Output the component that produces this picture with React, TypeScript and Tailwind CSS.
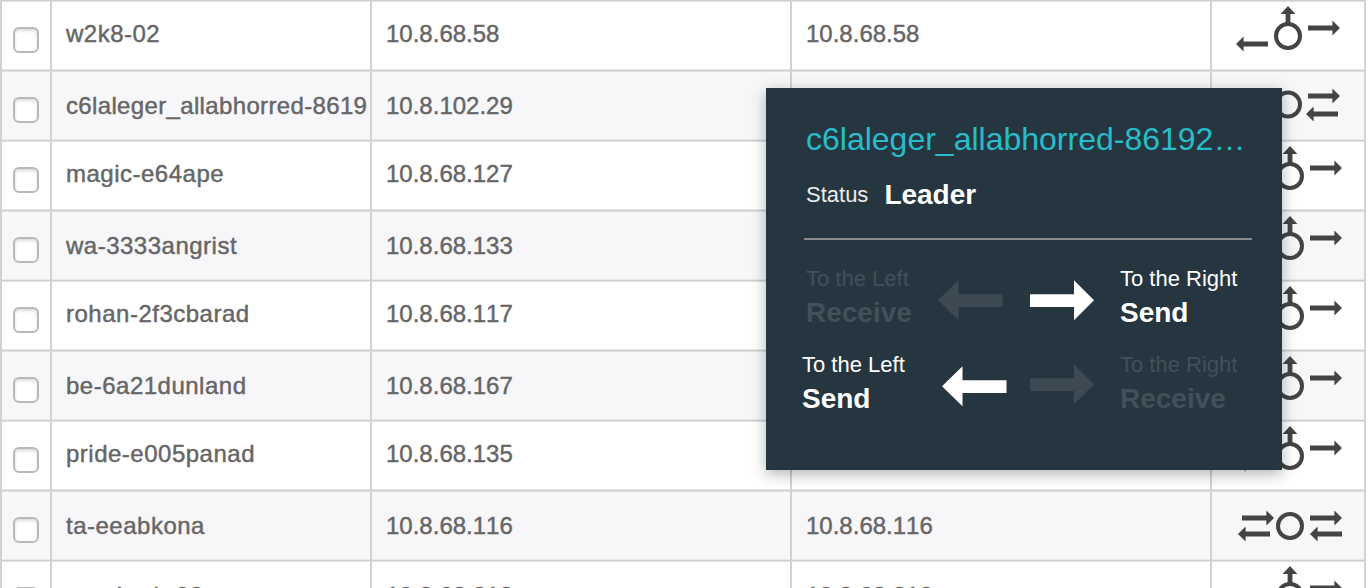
import type { ReactNode } from "react";

type Topology = "default" | "leader" | "both";
type Host = { name: string; ip: string; address: string; topology: Topology };

const hosts: Host[] = [
  { name: "w2k8-02", ip: "10.8.68.58", address: "10.8.68.58", topology: "default" },
  { name: "c6laleger_allabhorred-8619", ip: "10.8.102.29", address: "10.8.102.29", topology: "leader" },
  { name: "magic-e64ape", ip: "10.8.68.127", address: "10.8.68.127", topology: "default" },
  { name: "wa-3333angrist", ip: "10.8.68.133", address: "10.8.68.133", topology: "default" },
  { name: "rohan-2f3cbarad", ip: "10.8.68.117", address: "10.8.68.117", topology: "default" },
  { name: "be-6a21dunland", ip: "10.8.68.167", address: "10.8.68.167", topology: "default" },
  { name: "pride-e005panad", ip: "10.8.68.135", address: "10.8.68.135", topology: "default" },
  { name: "ta-eeabkona", ip: "10.8.68.116", address: "10.8.68.116", topology: "both" },
  { name: "mordorrb-00", ip: "10.8.68.212", address: "10.8.68.212", topology: "default" },
];

function Right({ x, y }: { x: number; y: number }) {
  return <path d={`M${x} ${y - 2.4}h24.4v-5.2l7.600 7.6l-7.6 7.6v-5.2h-24.4z`} />;
}

function Left({ x, y }: { x: number; y: number }) {
  return <path d={`M${x + 32} ${y - 2.4}h-24.4v-5.2l-7.6 7.6l7.6 7.6v-5.2h24.4z`} />;
}

function TopologyIcon({ kind, shift }: { kind: Topology; shift: number }) {
  const cy = kind === "leader" ? 34.5 : 36;
  return (
    <svg width="152" height="70" viewBox="0 0 152 70" fill="#444444" className="block">
      <g transform={`translate(${shift} 0)`}>
        <circle cx="76" cy={cy} r="12" fill="none" stroke="#444444" strokeWidth="4" />
        {kind === "default" && (
          <>
            <path d="M76 6l7.400 8h-5v9.500h-4.800v-9.500h-5z" />
            <Right x={96} y={28} />
            <Left x={24} y={44} />
          </>
        )}
        {kind === "both" && (
          <>
            <Right x={28} y={28} />
            <Left x={24} y={44} />
            <Right x={96} y={28} />
            <Left x={96} y={44} />
          </>
        )}
        {kind === "leader" && (
          <>
            <Right x={28} y={26} />
            <Left x={24} y={44} />
            <Right x={96} y={26} />
            <Left x={94} y={44} />
          </>
        )}
      </g>
    </svg>
  );
}

function TextCell({ low, tracking = "", children }: { low: boolean; tracking?: string; children: ReactNode }) {
  return (
    <div
      className={`overflow-hidden whitespace-nowrap border-r-2 border-[#d2d2d2] pl-[14px] text-[24px] leading-[28px] text-[#666666] [-webkit-text-stroke:0.45px_#666666] [font-kerning:none] ${tracking} ${
        low ? "pt-[22px]" : "pt-[20px]"
      }`}
    >
      {children}
    </div>
  );
}

function HostRow({ host, index }: { host: Host; index: number }) {
  const odd = index % 2 === 1;
  const low = odd || index === 8;
  return (
    <div
      className={`grid h-[70px] shrink-0 grid-cols-[50px_320px_420px_420px_154px] shadow-[inset_0_1px_0_#cfcfcf,inset_0_2px_0_#e2e2e2,inset_0_-1px_0_#e9e9e9] ${
        odd ? "bg-[#f7f7fa]" : "bg-white"
      }`}
    >
      <div className="border-r-2 border-[#d2d2d2] pl-[11px] pt-[27px]">
        <div className="h-[26px] w-[26px] rounded-[6px] border-2 border-[#b9b9b9] bg-white shadow-[inset_0_2px_3px_rgba(0,0,0,0.14)]" />
      </div>
      <TextCell low={low} tracking={host.name.length > 20 ? "tracking-[0.35px]" : "tracking-[0.5px]"}>
        {host.name}
      </TextCell>
      <TextCell low={low}>{host.ip}</TextCell>
      <TextCell low={low}>{host.address}</TextCell>
      <div className="border-r-2 border-[#d2d2d2]">
        <TopologyIcon kind={host.topology} shift={index < 2 ? 0 : 2} />
      </div>
    </div>
  );
}

function BigArrow({ dir, muted }: { dir: "left" | "right"; muted?: boolean }) {
  return (
    <svg width="65" height="41" viewBox="0 0 65 41" className={muted ? "fill-[#3d4a53]" : "fill-white"}>
      {dir === "right" ? (
        <path d="M0 14.300h44v-14l20 20l-20 20v-13.300h-44z" />
      ) : (
        <path d="M64.500 14.300h-44v-14l-20.500 20l20.500 20v-13.300h44z" />
      )}
    </svg>
  );
}

function Direction({ label, action, muted }: { label: string; action: string; muted?: boolean }) {
  return (
    <div className={`whitespace-nowrap ${muted ? "text-[#415059]" : "text-white"}`}>
      <div className="text-[22px] leading-[26px]">{label}</div>
      <div className="mt-[5px] text-[28px] font-bold leading-[32px]">{action}</div>
    </div>
  );
}

function StatusPopover() {
  return (
    <div className="absolute left-[766px] top-[88px] h-[382px] w-[516px] bg-[#263640] pl-[36px] pt-[32px] shadow-[0_4px_14px_rgba(0,0,0,0.3)]">
      <div className="pl-[4px] text-[32px] leading-[38px] text-[#27bdcb]">c6laleger_allabhorred-86192…</div>
      <div className="mt-[21px] flex h-[32px] pl-[4px] leading-[32px]">
        <span className="text-[22px] text-[#eeeeee]">Status</span>
        <span className="ml-[16px] text-[28px] font-bold text-white">Leader</span>
      </div>
      <div className="ml-[2px] mt-[27px] h-[2px] w-[448px] bg-[#8a8a8a]" />
      <div className="mt-[26px] grid h-[86px] grid-cols-[136px_92px_90px_1fr]">
        <div className="pl-[4px]">
          <Direction label="To the Left" action="Receive" muted />
        </div>
        <div className="pt-[14px]">
          <BigArrow dir="left" muted />
        </div>
        <div className="pt-[14px]">
          <BigArrow dir="right" />
        </div>
        <Direction label="To the Right" action="Send" />
      </div>
      <div className="grid grid-cols-[140px_88px_90px_1fr]">
        <Direction label="To the Left" action="Send" />
        <div className="pt-[14px]">
          <BigArrow dir="left" />
        </div>
        <div className="pt-[12px]">
          <BigArrow dir="right" muted />
        </div>
        <Direction label="To the Right" action="Receive" muted />
      </div>
    </div>
  );
}

export default function App() {
  return (
    <div className="relative h-[588px] w-[1370px] overflow-hidden bg-white font-['Liberation_Sans',Arial,sans-serif]">
      <div className="flex w-[1366px] flex-col border-l-2 border-[#d2d2d2]">
        {hosts.map((host, i) => (
          <HostRow key={host.name} host={host} index={i} />
        ))}
      </div>
      <StatusPopover />
    </div>
  );
}
